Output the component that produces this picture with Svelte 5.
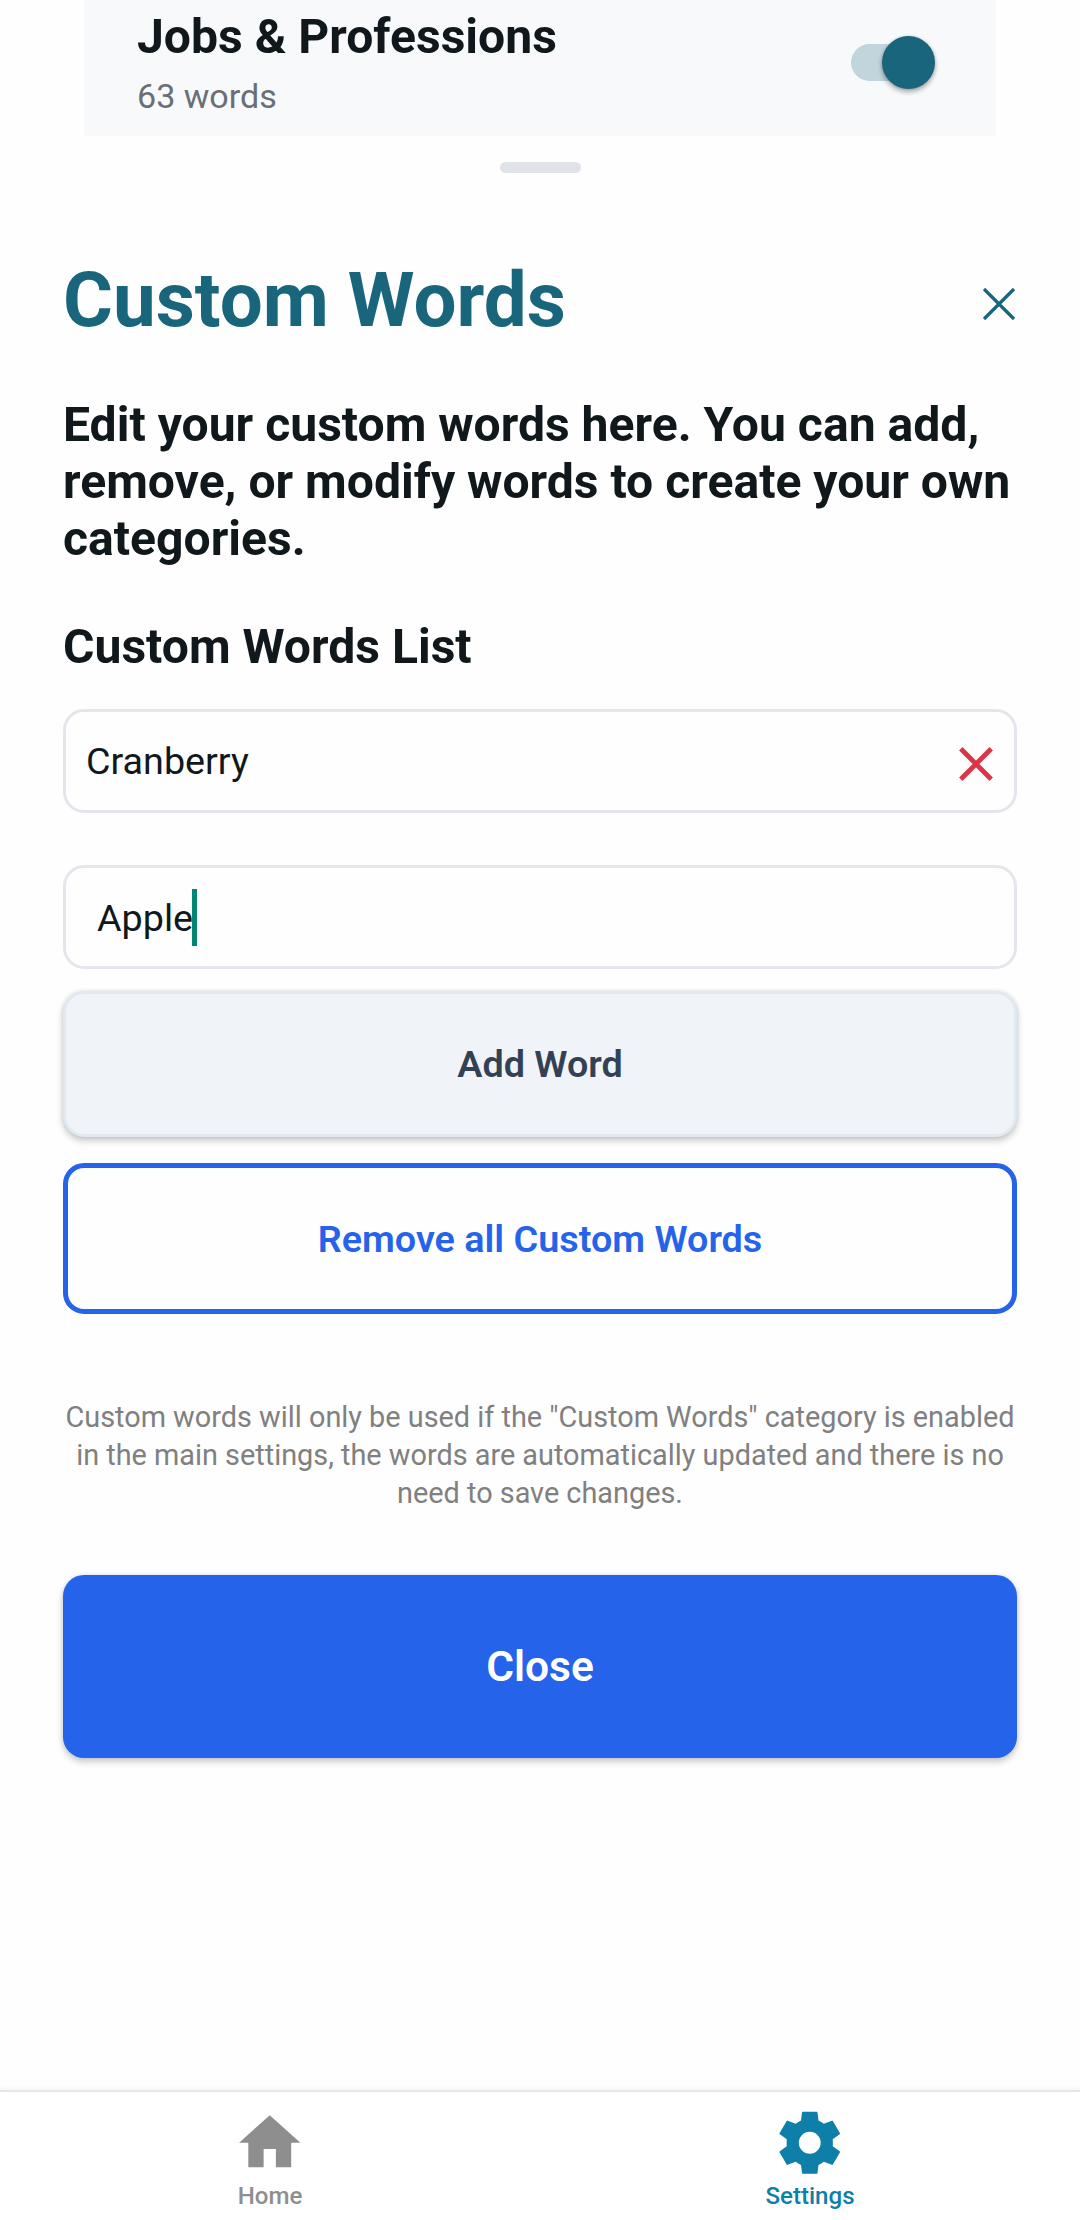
<script>
  let words = $state(['Cranberry']);
  let draft = $state('Apple');

  function addWord() {
    if (draft.trim()) {
      words.push(draft.trim());
      draft = '';
    }
  }
</script>

<div class="screen">
  <section class="category">
    <div class="category-text">
      <div class="category-name"><span>Jobs &amp; Professions</span></div>
      <div class="category-count"><span>63 words</span></div>
    </div>
    <div class="toggle"><div class="thumb"></div></div>
  </section>

  <main class="sheet">
    <div class="handle"></div>

    <header class="sheet-header">
      <h1>Custom Words</h1>
      <svg class="close-icon" viewBox="0 0 34 34">
        <path d="M2 2L32 32M32 2L2 32" />
      </svg>
    </header>

    <p class="intro">
      Edit your custom words here. You can add,<br />remove, or modify words to create your own<br />categories.
    </p>

    <h2>Custom Words List</h2>

    {#each words as word, i}
      <div class="field word">
        <span>{word}</span>
        <svg class="remove-icon" viewBox="0 0 34 34" role="presentation" onclick={() => words.splice(i, 1)}>
          <path d="M1.8 1.8L32.2 32.2M32.2 1.8L1.8 32.2" />
        </svg>
      </div>
    {/each}

    <div class="field entry"><span>{draft}</span><i class="caret"></i></div>

    <button class="add" onclick={addWord}>Add Word</button>
    <button class="remove-all" onclick={() => (words = [])}>Remove all Custom Words</button>

    <p class="note">
      Custom words will only be used if the "Custom Words" category is enabled<br />in the main settings, the words are automatically updated and there is no<br />need to save changes.
    </p>

    <button class="close">Close</button>
  </main>

  <nav>
    <div class="tab">
      <svg viewBox="0 0 24 24"><path d="M10 20v-6h4v6h5v-8h3L12 3 2 12h3v8z" /></svg>
      <span>Home</span>
    </div>
    <div class="tab active">
      <svg viewBox="0 0 220.5 220.5">
        <path
          fill-rule="evenodd"
          d="M88 17.5H132Q133 17.5 133.300 19L136.500 43.500Q145 47.500 152.500 53L176.500 44Q178.500 43.400 179.500 45L201 81.500Q201.500 83 200 84.500L179.200 99.500Q180.200 110.250 179.200 121L200 136Q201.500 137.500 201 139L179.500 175.500Q178.500 177.100 176.500 176.500L152.500 167.500Q145 173 136.500 177L133.300 201.500Q133 203 132 203H88.500Q87.500 203 87.200 201.500L84 177Q75.500 173 68 167.500L44 176.500Q42 177.100 41 175.500L19.500 139Q19 137.500 20.500 136L41.300 121Q40.300 110.250 41.300 99.500L20.500 84.500Q19 83 19.500 81.500L41 45Q42 43.400 44 44L68 53Q75.500 47.500 84 43.500L87.200 19Q87.500 17.500 88 17.500ZM110.250 77.500A32.750 32.750 0 1 0 110.250 143A32.750 32.750 0 1 0 110.250 77.500Z"
        />
      </svg>
      <span>Settings</span>
    </div>
  </nav>
</div>

<style>
  :global(body) {
    margin: 0;
    background: #fefefe;
  }
  .screen {
    width: 1080px;
    height: 2220px;
    display: flex;
    flex-direction: column;
    overflow: hidden;
    background: #fefefe;
    color: #11181c;
    font-family: Roboto, sans-serif;
  }
  h1,
  h2,
  p {
    margin: 0;
  }
  .category {
    box-sizing: border-box;
    flex: none;
    height: 136px;
    margin: 0 84px;
    padding: 8px 61px 0 53px;
    display: flex;
    justify-content: space-between;
    background: #f8f9fb;
  }
  .category-name {
    font-size: 48.1px;
    font-weight: 700;
    line-height: 57px;
  }
  .category-count {
    margin-top: 8px;
    font-size: 34.1px;
    line-height: 46px;
    color: #687076;
  }
  .toggle {
    display: flex;
    align-items: center;
    justify-content: flex-end;
    width: 84px;
    height: 37px;
    margin-top: 36px;
    border-radius: 19px;
    background: linear-gradient(90deg, #c1d5dc 66px, transparent 66px);
  }
  .thumb {
    width: 53px;
    height: 53px;
    flex: none;
    border-radius: 50%;
    background: #19657c;
    box-shadow: 0 3px 5px rgba(0, 0, 0, 0.32), 0 0 3px rgba(0, 0, 0, 0.14);
  }
  .sheet {
    flex: 1;
    display: flex;
    flex-direction: column;
    padding: 0 63px;
  }
  .handle {
    align-self: center;
    width: 81px;
    height: 11px;
    margin-top: 26px;
    border-radius: 5.5px;
    background: #e0e4e9;
  }
  .sheet-header {
    display: flex;
    align-items: center;
    justify-content: space-between;
    height: 90px;
    margin-top: 82px;
    padding-right: 1px;
  }
  h1 {
    font-size: 76.3px;
    font-weight: 700;
    line-height: 90px;
    color: #19657c;
  }
  .close-icon {
    width: 34px;
    height: 34px;
    margin-top: 8px;
    fill: none;
    stroke: #19657c;
    stroke-width: 3.2;
  }
  .intro {
    margin-top: 51px;
    font-size: 48.1px;
    font-weight: 700;
    line-height: 57px;
    white-space: nowrap;
  }
  h2 {
    margin-top: 51px;
    font-size: 48.1px;
    font-weight: 700;
    line-height: 57px;
  }
  .field {
    box-sizing: border-box;
    height: 104px;
    display: flex;
    align-items: center;
    border: 3px solid #e3e7eb;
    border-radius: 21px;
    font-size: 37.7px;
    line-height: 44px;
  }
  .word {
    justify-content: space-between;
    margin-top: 34px;
    padding: 0 21px 0 20px;
  }
  .remove-icon {
    width: 34px;
    height: 34px;
    margin-top: 6px;
    fill: none;
    stroke: #dc3545;
    stroke-width: 4.8;
  }
  .entry {
    margin-top: 52px;
    padding-left: 31px;
  }
  .entry span {
    padding-top: 2px;
  }
  .caret {
    width: 5px;
    height: 57px;
    margin-left: -1px;
    background: #048675;
  }
  button {
    box-sizing: border-box;
    flex: none;
    padding: 0;
    border: 0;
    border-radius: 21px;
    font-family: inherit;
    font-weight: 600;
    font-size: 37.75px;
  }
  .add {
    height: 146px;
    margin-top: 22px;
    border: 3px solid #e2e8f0;
    background: #f0f4f9;
    color: #334155;
    box-shadow: 0 4px 7px rgba(0, 0, 0, 0.2), 0 0 4px rgba(0, 0, 0, 0.1);
  }
  .remove-all {
    height: 151px;
    margin-top: 26px;
    border: 5px solid #2563eb;
    background: transparent;
    color: #2563eb;
  }
  .note {
    margin-top: 84px;
    font-size: 28.85px;
    line-height: 38px;
    text-align: center;
    white-space: nowrap;
    color: #808080;
  }
  .close {
    height: 183px;
    margin-top: 63px;
    background: #2563eb;
    color: #fff;
    font-size: 42.5px;
    box-shadow: 0 4px 7px rgba(0, 0, 0, 0.2), 0 0 4px rgba(0, 0, 0, 0.1);
  }
  nav {
    box-sizing: border-box;
    flex: none;
    height: 130px;
    display: flex;
    border-top: 2px solid #e6e6e6;
    background: #fff;
    box-shadow: 0 -1px 6px rgba(0, 0, 0, 0.05);
  }
  .tab {
    flex: 1;
    display: flex;
    flex-direction: column;
    align-items: center;
    padding-top: 14px;
    color: #8e8e8e;
    font-size: 24.1px;
    font-weight: 500;
    line-height: 30px;
  }
  .tab svg {
    width: 73.5px;
    height: 73.5px;
    fill: currentColor;
  }
  .tab span {
    margin-top: 1px;
  }
  .active {
    color: #0e7fa8;
  }
</style>
